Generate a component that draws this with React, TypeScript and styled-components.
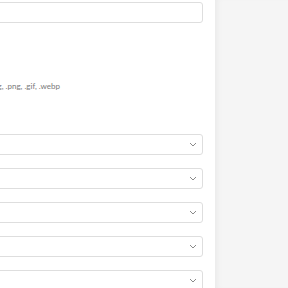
import React from 'react';
import styled, { createGlobalStyle } from 'styled-components';

const GlobalStyle = createGlobalStyle`
  html, body {
    margin: 0;
    padding: 0;
    background: #ffffff;
  }
  body {
    font-family: 'Lato', 'Open Sans', sans-serif;
  }
`;

const Page = styled.div`
  display: flex;
  width: 288px;
  height: 288px;
  overflow: hidden;
`;

const Main = styled.div`
  flex: 0 0 215px;
  background: #ffffff;
  overflow: hidden;
  padding: 2px 12px 0 0;
  box-sizing: border-box;
`;

const Column = styled.div`
  margin-left: -160px; /* panel continues off to the left */
  display: flex;
  flex-direction: column;
`;

const Sidebar = styled.div`
  flex: 1;
  background: #f5f5f5;
  box-shadow: inset 6px 0 6px -4px rgba(0, 0, 0, 0.05);
`;

const TextInput = styled.div`
  height: 21px;
  border: 1px solid #dedede;
  border-radius: 3px;
  background: #fff;
  box-sizing: border-box;
`;

const Hint = styled.div`
  margin-top: 58px;
  width: 220px;
  text-align: right;
  font-size: 8px;
  line-height: 10px;
  color: #7a7a7a;
  white-space: nowrap;
`;

const SelectList = styled.div`
  margin-top: 43px;
  display: flex;
  flex-direction: column;
  gap: 13px;
`;

const Select = styled.div`
  height: 21px;
  border: 1px solid #dedede;
  border-radius: 3px;
  background: #fff;
  box-sizing: border-box;
  display: flex;
  align-items: center;
  justify-content: flex-end;
  padding-right: 5px;
`;

const Chevron = () => (
  <svg width="8" height="5" viewBox="0 0 8 5" fill="none">
    <path d="M1 1l3 3 3-3" stroke="#8a8a8a" strokeWidth="1" />
  </svg>
);

export default function App() {
  return (
    <>
      <GlobalStyle />
      <Page>
        <Main>
          <Column>
            <TextInput />
            <Hint>Allowed file types: .jpg, .jpeg, .png, .gif, .webp</Hint>
            <SelectList>
              {[0, 1, 2, 3, 4].map((i) => (
                <Select key={i}>
                  <Chevron />
                </Select>
              ))}
            </SelectList>
          </Column>
        </Main>
        <Sidebar />
      </Page>
    </>
  );
}
